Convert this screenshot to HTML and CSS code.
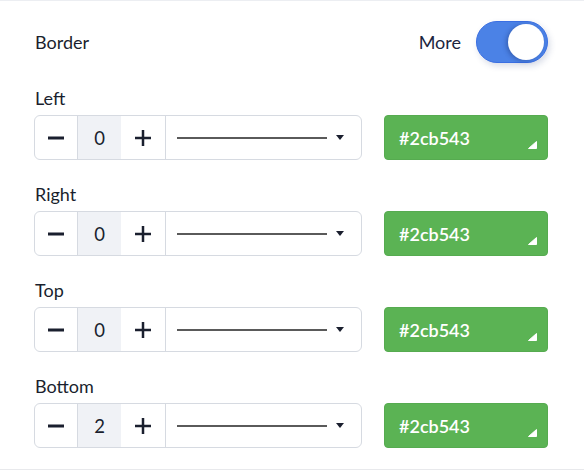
FILE: index.html
```html
<!DOCTYPE html>
<html>
<head>
<meta charset="utf-8">
<link rel="stylesheet" href="styles.css">
</head>
<body>
<div class="panel">
  <div class="header">
    <span class="title">Border</span>
    <div class="more">
      <span class="more-label">More</span>
      <span class="toggle"><span class="knob"></span></span>
    </div>
  </div>

  <div class="side">
    <div class="label">Left</div>
    <div class="controls">
      <div class="group">
        <span class="btn"><svg width="18" height="18" viewBox="0 0 18 18"><path d="M1 9H17" stroke="#1a1f2e" stroke-width="2.8"/></svg></span>
        <span class="val">0</span>
        <span class="btn"><svg width="18" height="18" viewBox="0 0 18 18"><path d="M1 9H17M9 1V17" stroke="#1a1f2e" stroke-width="2.5"/></svg></span>
        <span class="sel"><span class="line"></span><span class="caret"></span></span>
      </div>
      <div class="color"><span>#2cb543</span><svg class="grip" width="9" height="8" viewBox="0 0 9 8"><path d="M8.5 0.5V7.5H0.5Z" fill="#fff" stroke="#fff" stroke-linejoin="round"/></svg></div>
    </div>
  </div>

  <div class="side">
    <div class="label">Right</div>
    <div class="controls">
      <div class="group">
        <span class="btn"><svg width="18" height="18" viewBox="0 0 18 18"><path d="M1 9H17" stroke="#1a1f2e" stroke-width="2.8"/></svg></span>
        <span class="val">0</span>
        <span class="btn"><svg width="18" height="18" viewBox="0 0 18 18"><path d="M1 9H17M9 1V17" stroke="#1a1f2e" stroke-width="2.5"/></svg></span>
        <span class="sel"><span class="line"></span><span class="caret"></span></span>
      </div>
      <div class="color"><span>#2cb543</span><svg class="grip" width="9" height="8" viewBox="0 0 9 8"><path d="M8.5 0.5V7.5H0.5Z" fill="#fff" stroke="#fff" stroke-linejoin="round"/></svg></div>
    </div>
  </div>

  <div class="side">
    <div class="label">Top</div>
    <div class="controls">
      <div class="group">
        <span class="btn"><svg width="18" height="18" viewBox="0 0 18 18"><path d="M1 9H17" stroke="#1a1f2e" stroke-width="2.8"/></svg></span>
        <span class="val">0</span>
        <span class="btn"><svg width="18" height="18" viewBox="0 0 18 18"><path d="M1 9H17M9 1V17" stroke="#1a1f2e" stroke-width="2.5"/></svg></span>
        <span class="sel"><span class="line"></span><span class="caret"></span></span>
      </div>
      <div class="color"><span>#2cb543</span><svg class="grip" width="9" height="8" viewBox="0 0 9 8"><path d="M8.5 0.5V7.5H0.5Z" fill="#fff" stroke="#fff" stroke-linejoin="round"/></svg></div>
    </div>
  </div>

  <div class="side">
    <div class="label">Bottom</div>
    <div class="controls">
      <div class="group">
        <span class="btn"><svg width="18" height="18" viewBox="0 0 18 18"><path d="M1 9H17" stroke="#1a1f2e" stroke-width="2.8"/></svg></span>
        <span class="val">2</span>
        <span class="btn"><svg width="18" height="18" viewBox="0 0 18 18"><path d="M1 9H17M9 1V17" stroke="#1a1f2e" stroke-width="2.5"/></svg></span>
        <span class="sel"><span class="line"></span><span class="caret"></span></span>
      </div>
      <div class="color"><span>#2cb543</span><svg class="grip" width="9" height="8" viewBox="0 0 9 8"><path d="M8.5 0.5V7.5H0.5Z" fill="#fff" stroke="#fff" stroke-linejoin="round"/></svg></div>
    </div>
  </div>
</div>
</body>
</html>
```

FILE: styles.css
```css
* { box-sizing: border-box; }
html, body { margin: 0; padding: 0; background: #fff; }
body {
  font-family: Lato, "Noto Sans", sans-serif;
  color: #1a1f2e;
  font-size: 18px;
}
.panel {
  width: 584px;
  border-top: 1px solid #eceef2;
  border-bottom: 1px solid #e8e9ec;
  padding: 20px 36px 21px 34px;
}
.header {
  display: flex;
  align-items: center;
  justify-content: space-between;
  height: 42px;
  margin-bottom: 23px;
}
.title { line-height: 24px; padding-left: 1px; }
.more { display: flex; align-items: center; gap: 15px; }
.more-label { line-height: 24px; color: #1c2540; }
.toggle {
  width: 72px;
  height: 42px;
  border-radius: 21px;
  background: #4b82e6;
  border: 1px solid #3a6fe2;
  display: flex;
  align-items: center;
  justify-content: flex-end;
  padding-right: 3px;
  box-shadow: 2px 3px 6px rgba(40, 60, 120, 0.18);
}
.knob {
  width: 36px;
  height: 36px;
  border-radius: 50%;
  background: #fff;
  box-shadow: -2px 1px 4px rgba(20, 40, 100, 0.35);
}
.side { margin-bottom: 22px; }
.side:last-child { margin-bottom: 0; }
.label { line-height: 24px; margin-bottom: 5px; padding-left: 1px; }
.controls { display: flex; gap: 22px; }
.group {
  display: flex;
  width: 328px;
  height: 45px;
  border: 1px solid #d6dae1;
  border-radius: 6px;
  overflow: hidden;
}
.btn, .val {
  width: 44px;
  display: flex;
  align-items: center;
  justify-content: center;
  flex: none;
}
.btn:first-child { width: 42px; }
.val { font-size: 18.5px; }
.val, .btn + .btn, .sel { border-left: 1px solid #d6dae1; }
.val { background: #f0f2f6; }
.sel {
  flex: 1;
  display: flex;
  align-items: center;
  padding-left: 11px;
}
.line {
  width: 150px;
  height: 2px;
  background: #5a5a5a;
}
.caret {
  margin-left: 9px;
  width: 0;
  height: 0;
  border-left: 4.5px solid transparent;
  border-right: 4.5px solid transparent;
  border-top: 5px solid #1a1f2e;
}
.color {
  width: 164px;
  height: 45px;
  background: #5bb354;
  border: 1px solid #56ab50;
  border-radius: 4px;
  color: #fff;
  font-weight: 600;
  display: flex;
  align-items: center;
  justify-content: space-between;
  padding: 1px 10px 0 14px;
}
.color span { line-height: 24px; }
.grip { align-self: flex-end; margin-bottom: 10px; }
```
